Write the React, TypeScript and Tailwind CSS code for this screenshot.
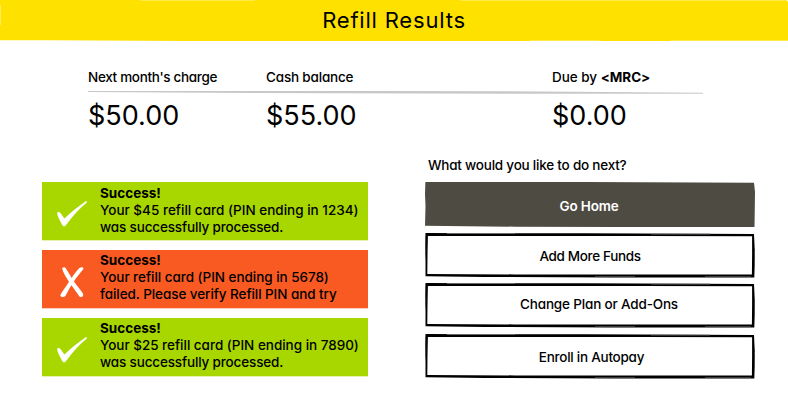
import React from "react";

type Notice = { ok: boolean; pad: string; lines: { text: string; spacing: string }[] };

const notices: Notice[] = [
  {
    ok: true,
    pad: "pt-[3px]",
    lines: [
      { text: "Your $45 refill card (PIN ending in 1234)", spacing: "tracking-[0.01px]" },
      { text: "was successfully processed.", spacing: "tracking-[-0.15px]" },
    ],
  },
  {
    ok: false,
    pad: "pt-[2px]",
    lines: [
      { text: "Your refill card (PIN ending in 5678)", spacing: "tracking-[-0.04px]" },
      { text: "failed. Please verify Refill PIN and try", spacing: "tracking-[-0.07px]" },
    ],
  },
  {
    ok: true,
    pad: "pt-[2px]",
    lines: [
      { text: "Your $25 refill card (PIN ending in 7890)", spacing: "tracking-[-0.02px]" },
      { text: "was successfully processed.", spacing: "tracking-[-0.15px]" },
    ],
  },
];

function Check() {
  return (
    <svg className="block h-[58px] w-[58px]" viewBox="0 0 58 58" fill="#fff">
      <path d="M15.2 30.8C15.8 29.8 17.6 29.8 18.6 31.2L22.4 36.6C28.2 30.6 36 24.6 43.6 19.2C45.2 18.9 45.4 20 44.6 20.7C37 26.6 31 33.6 25.3 41.5C23.5 43.5 22.3 45.6 20.6 43.6C18.4 39.2 15.3 34.6 15.2 30.8Z" />
    </svg>
  );
}

function Cross() {
  return (
    <svg className="block h-[58px] w-[58px]" viewBox="0 0 58 58" fill="#fff">
      <path d="M20.1 18.2C21.6 16.8 23.2 17 24.1 18.8L29.7 28C32 24.5 34.5 20.9 37.4 18C38.9 16.9 41.9 16.9 41.4 18.9C38.2 23 34.5 27 31.9 31.6C35 36.2 38.6 39.8 41.1 43.8C41.8 46.6 39.4 48 37.4 46.4C34.7 42.7 32 38.7 29.5 35.3C27.2 38.6 25.4 42.6 23.2 46.2C21.2 47.8 18 46.8 18.4 44.7C20.9 40.3 24.4 36 27 31.7C24.7 27.8 21.2 23.3 20.1 18.2Z" />
    </svg>
  );
}

function Frame() {
  return (
    <svg className="absolute inset-0 h-full w-full overflow-visible" viewBox="0 0 330 44" preserveAspectRatio="none">
      <path
        fillRule="evenodd"
        fill="#000"
        d="M0.5 0L60 0.2L160 0.3L329 1L329.5 12L330 22L329.3 44.4L190 44.4L60 44L0.5 43.3L0.5 28L0 12ZM2.9 3L2.5 22L2.3 41L90 41.4L200 41.6L326.9 41.4L327.1 22L327.1 3.2L220 2.9L90 3Z"
      />
      <path d="M22 0.5H90M170 43.9H210M226 1H285M280 43.9H326" stroke="#777" strokeWidth="0.8" />
      <path d="M0.6 5V20M329.5 18V34" stroke="#555" strokeWidth="0.8" />
    </svg>
  );
}

function Balance({ label, amount, className, spacing }: { label: React.ReactNode; amount: string; className: string; spacing: string }) {
  return (
    <div className={className}>
      <div className={`h-[24px] pt-[2px] leading-[17px] ${spacing}`}>{label}</div>
      <div className="pt-[9px] text-[27px] leading-[32px] font-normal tracking-[0px]">{amount}</div>
    </div>
  );
}

export default function App() {
  return (
    <div className="h-[401px] w-[788px] overflow-hidden bg-white font-['Inter',sans-serif] text-[13.5px] font-medium whitespace-nowrap text-black [font-feature-settings:'cv11']">
      <header className="relative flex h-[41px] justify-center bg-[#ffe100] pt-[6px] text-[22px] leading-[28px]">
        <svg className="absolute inset-0 h-full w-full" viewBox="0 0 788 41">
          <path d="M0 40.2H48L96 40.6L187 41H0ZM788 0V2L786 0Z" fill="#fff" />
          <path d="M0.4 5V25" stroke="#fff" strokeWidth="0.8" opacity="0.5" />
          <path d="M140 0.3H255M460 0.3H785M530 40.7H600M670 40.7H788" stroke="#fff" strokeWidth="0.6" opacity="0.6" />
        </svg>
        <h1 className="relative font-normal tracking-[0.8px]">Refill Results</h1>
      </header>

      <section className="relative ml-[88px] mt-[26px] flex h-[90px] w-[615px]">
        <Balance className="w-[178px]" label="Next month's charge" amount="$50.00" spacing="tracking-[-0.33px]" />
        <Balance className="w-[286px]" label="Cash balance" amount="$55.00" spacing="tracking-[-0.18px]" />
        <Balance
          className=""
          label={<>Due by <b>&lt;MRC&gt;</b></>}
          amount="$0.00"
          spacing="tracking-[-0.03px]"
        />
        <svg className="absolute left-0 top-[23px] h-[4px] w-[615px]" viewBox="0 0 615 4">
          <path d="M0 1L300 0.9L420 1.2L615 2.8V3.7H440L120 2.8L0 1.9Z" fill="#c8c8c8" />
        </svg>
      </section>

      <main className="flex">
        <section className="ml-[42px] mt-[25px] flex w-[326px] flex-col gap-[10px]">
          {notices.map((n, i) => (
            <div
              key={i}
              className={`flex h-[58px] ${n.ok ? "bg-[#a8d700] shadow-[0_0.6px_0_#d3eb7f]" : "bg-[#f95a22] shadow-[0_0.6px_0_#fcab8f]"}`}
            >
              {n.ok ? <Check /> : <Cross />}
              <div className={`leading-[17px] ${n.pad}`}>
                <b className="block">Success!</b>
                {n.lines.map((l) => (
                  <p key={l.text} className={l.spacing}>{l.text}</p>
                ))}
              </div>
            </div>
          ))}
        </section>

        <section className="ml-[57px] w-[330px]">
          <h2 className="ml-[3px] h-[25px] leading-[17px] tracking-[-0.22px]">What would you like to do next?</h2>
          <div className="flex flex-col">
            <button className="relative h-[45px] pr-[2px] pt-[4px] font-semibold tracking-[-0.15px] text-white">
              <svg className="absolute inset-0 h-full w-full" viewBox="0 0 330 45">
                <path d="M0.4 0H160L329 0.8L330 10L329.5 45H190L90 44.7L0 43.7L0.5 24L0 12Z" fill="#4e4b43" />
              </svg>
              <span className="relative">Go Home</span>
            </button>
            <button className="relative mt-[6px] h-[44px] pt-[3px]">
              <Frame />
              <span className="relative tracking-[-0.35px]">Add More Funds</span>
            </button>
            <button className="relative mt-[6px] h-[44px] pb-[2px] pl-[18px]">
              <Frame />
              <span className="relative tracking-[-0.17px]">Change Plan or Add-Ons</span>
            </button>
            <button className="relative mt-[7px] h-[44px] pl-[3px] pt-[2px]">
              <Frame />
              <span className="relative tracking-[-0.25px]">Enroll in Autopay</span>
            </button>
          </div>
        </section>
      </main>
    </div>
  );
}
